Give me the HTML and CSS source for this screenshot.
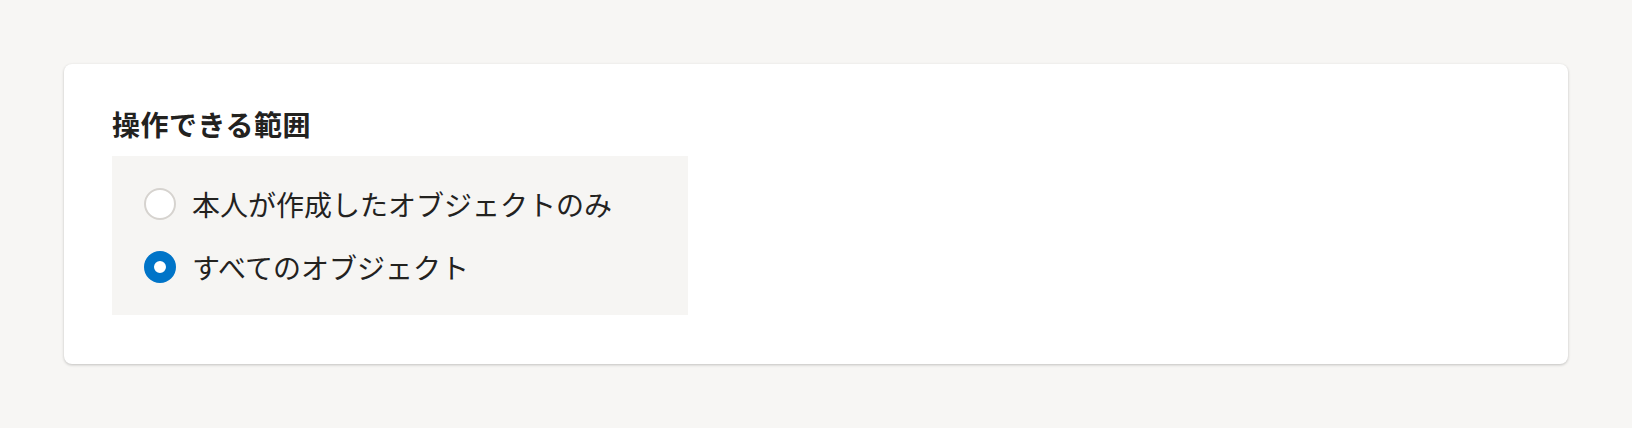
FILE: index.html
```html
<!DOCTYPE html>
<html lang="ja">
<head>
<meta charset="utf-8">
<title>操作できる範囲</title>
<link rel="stylesheet" href="styles.css">
</head>
<body>
<main class="page">
  <section class="card">
    <h2 class="card-title">操作できる範囲</h2>
    <div class="options">
      <label class="option">
        <span class="radio"></span>
        <span class="label-text">本人が作成したオブジェクトのみ</span>
      </label>
      <label class="option">
        <span class="radio radio-checked"></span>
        <span class="label-text">すべてのオブジェクト</span>
      </label>
    </div>
  </section>
</main>
</body>
</html>
```

FILE: styles.css
```css
* { box-sizing: border-box; }
html, body {
  margin: 0;
  padding: 0;
  background: #f7f6f4;
  font-family: "Noto Sans CJK JP", "Noto Sans", sans-serif;
  color: #23221f;
}
.page {
  padding: 64px 64px;
}
.card {
  background: #ffffff;
  border-radius: 8px;
  box-shadow: 0 1px 3px rgba(0, 0, 0, 0.22);
  padding: 40px 48px 48px;
  height: 300px;
}
.card-title {
  margin: 0 0 12px;
  font-size: 28px;
  line-height: 40px;
  letter-spacing: 0.5px;
  font-weight: 700;
}
.options {
  width: 576px;
  background: #f6f5f3;
  padding: 32px;
  display: flex;
  flex-direction: column;
  gap: 31px;
}
.option {
  display: flex;
  align-items: center;
  gap: 16px;
  height: 32px;
}
.radio {
  width: 32px;
  height: 32px;
  border-radius: 50%;
  border: 2px solid #d6d3cf;
  background: #ffffff;
  flex: none;
}
.radio-checked {
  border: 10px solid #0074c8;
}
.label-text {
  font-size: 28px;
  line-height: 32px;
  font-weight: 400;
}
```
